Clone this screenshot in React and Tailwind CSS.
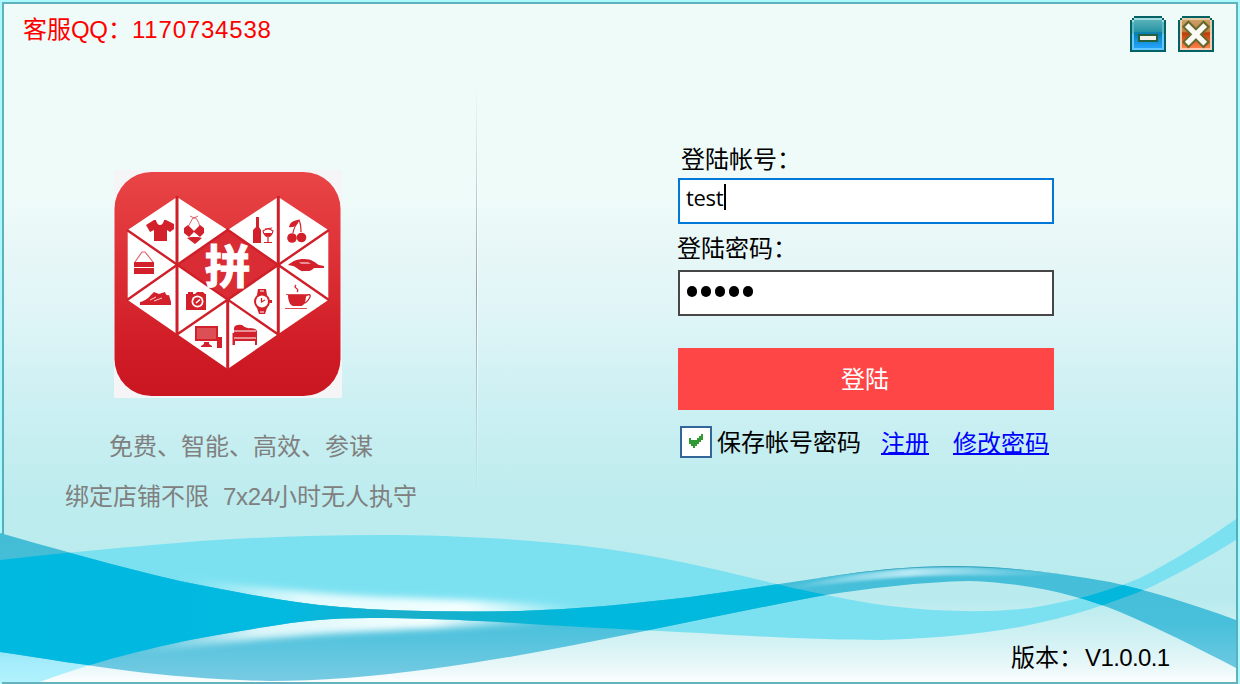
const BAND_LIGHT =
  "M0 560 C60 553 140 546 200 541 C260 537 320 535 380 535 C450 535 530 539 600 548 C660 556 710 568 760 580 C800 590 850 601 890 606 C940 612 990 613 1030 608 C1070 602 1110 591 1140 578 C1175 560 1205 541 1236 519 L1236 540 C1210 556 1180 573 1151 587 C1110 604 1070 617 1020 627 C970 636 920 639 880 640 C830 640 760 637 700 633 C640 630 580 627 530 624 C470 620 420 618 370 618 C330 618 300 621 265 627 C220 634 180 641 150 649 C120 656 80 667 40 682 L0 682 Z";

const BAND_BLUE =
  "M0 533 C50 547 110 565 180 581 C240 593 290 603 340 607 C400 612 460 612 520 611 C580 609 630 604 690 597 C740 590 790 582 840 575 C890 568 920 566 960 566 C1010 567 1060 573 1110 582 C1150 591 1190 603 1236 620 L1236 668 C1200 649 1160 629 1120 612 C1080 596 1030 583 970 581 C920 582 870 588 820 596 C760 607 700 620 640 632 C570 646 500 660 430 669 C370 677 320 681 270 681 C220 680 170 676 130 671 C90 666 40 658 0 652 Z";

function Waves() {
  return (
    <svg className="absolute inset-0" width="1240" height="684" viewBox="0 0 1240 684">
      <defs>
        <clipPath id="light"><path d={BAND_LIGHT} /></clipPath>
        <clipPath id="blue"><path d={BAND_BLUE} /></clipPath>
        <clipPath id="above">
          <path d="M0 500 H1240 V570 C1100 570 690 597 690 597 C630 604 580 609 520 611 C460 612 400 612 340 607 C290 603 240 593 180 581 C110 565 50 547 0 533 Z" />
        </clipPath>
        <clipPath id="below">
          <path d="M87 665 C110 658 130 654 150 649 C180 641 220 634 265 627 C300 621 330 618 370 618 C420 618 470 620 530 624 L640 631 C500 660 430 669 400 673 C300 682 200 680 87 665 Z" />
        </clipPath>
        <filter id="soft" x="-20%" y="-100%" width="140%" height="300%">
          <feGaussianBlur stdDeviation="6 3.5" />
        </filter>
        <filter id="fine" x="-10%" y="-100%" width="120%" height="300%">
          <feGaussianBlur stdDeviation="3 1.5" />
        </filter>
        <linearGradient id="blueFill" x1="0" x2="0" y1="533" y2="682" gradientUnits="userSpaceOnUse">
          <stop offset="0" stopColor="#43bcd6" />
          <stop offset="0.6" stopColor="#48c0db" />
          <stop offset="1" stopColor="#78cbe3" />
        </linearGradient>
        <linearGradient id="lightFill" x1="0" x2="0" y1="640" y2="682" gradientUnits="userSpaceOnUse">
          <stop offset="0" stopColor="#7be1f1" />
          <stop offset="0.5" stopColor="#a4ecfb" />
          <stop offset="1" stopColor="#b0f2fd" />
        </linearGradient>
        <linearGradient id="mixFill" x1="0" x2="1" y1="0" y2="0">
          <stop offset="0" stopColor="#00b9e0" />
          <stop offset="0.23" stopColor="#02b9e0" />
          <stop offset="0.33" stopColor="#1aafcb" />
          <stop offset="0.4" stopColor="#10b3d0" />
          <stop offset="0.47" stopColor="#00b8dd" />
          <stop offset="1" stopColor="#04b7dc" />
        </linearGradient>
        <linearGradient id="glow" x1="0" x2="1" y1="0" y2="0">
          <stop offset="0" stopColor="#f4ffff" stopOpacity="0" />
          <stop offset="0.3" stopColor="#f4ffff" stopOpacity="0.85" />
          <stop offset="0.7" stopColor="#f4ffff" />
          <stop offset="1" stopColor="#f4ffff" stopOpacity="0" />
        </linearGradient>
        <linearGradient id="streak" x1="0" x2="1" y1="0" y2="0">
          <stop offset="0" stopColor="#c4effa" stopOpacity="0" />
          <stop offset="0.45" stopColor="#b8e9f5" />
          <stop offset="1" stopColor="#9adcec" stopOpacity="0" />
        </linearGradient>
      </defs>
      <path d={BAND_LIGHT} fill="url(#lightFill)" />
      <g clipPath="url(#above)">
        <path
          d="M180 578 C250 587 320 594 380 597 C450 599 530 603 590 608 C500 624 400 622 340 616 C280 608 220 592 180 578 Z"
          fill="url(#glow)"
          filter="url(#soft)"
        />
      </g>
      <path d={BAND_BLUE} fill="url(#blueFill)" />
      <g clipPath="url(#below)">
        <path
          d="M130 654 C200 630 320 606 400 606 C460 610 520 618 560 623 C480 626 400 630 340 633 C260 638 190 646 130 654 Z"
          fill="url(#glow)"
          filter="url(#soft)"
        />
      </g>
      <g clipPath="url(#light)">
        <path d={BAND_BLUE} fill="url(#mixFill)" />
      </g>
      <g clipPath="url(#blue)">
        <path
          d="M780 590 C860 569 920 567 970 567 L1070 574 C1010 577 960 574 920 576 C880 578 830 584 780 590 Z"
          fill="url(#streak)"
          filter="url(#fine)"
        />
        <path
          d="M820 577 C890 567 920 566 960 566 C1000 567 1030 569 1060 573"
          fill="none"
          stroke="#3ca5bd"
          strokeWidth="2"
        />
      </g>
    </svg>
  );
}

function Logo() {
  return (
    <svg className="block" width="228" height="228" viewBox="0 0 228 228">
      <defs>
        <linearGradient id="red" x1="0" x2="0" y1="0" y2="1">
          <stop offset="0" stopColor="#e94546" />
          <stop offset="0.45" stopColor="#db2d34" />
          <stop offset="0.8" stopColor="#cf1b25" />
          <stop offset="1" stopColor="#ca1620" />
        </linearGradient>
      </defs>
      <rect width="228" height="228" fill="#f5f5f8" />
      <rect x="0.5" y="2" width="226" height="224" rx="37" fill="url(#red)" />
      <path
        d="M13.7 60 L63 27 L113.7 60 L164.3 27 L214.3 60 V130 L164.3 164 L113.7 199 L63 164 L13.7 130 Z"
        fill="#fff"
      />
      <path d="M63 95 L113.7 59 L164.3 95 L113.7 129.5 Z" fill="#da2c34" />
      <path
        d="M13 60 L164.3 164.5 M215 60 L63 164.5 M13 130 L63 95 L115 59 M112.5 59 L164.3 95 L215 130"
        fill="none"
        stroke="#cf1f29"
        strokeWidth="2.4"
      />
      <path
        d="M63 26 V164 M164.3 26 V164 M113.7 129 V200"
        fill="none"
        stroke="#cf1f29"
        strokeWidth="3"
      />
      <text
        x="113.7"
        y="113"
        textAnchor="middle"
        fontSize="46"
        fontWeight="700"
        fill="#fff"
        stroke="#fff"
        strokeWidth="1"
        fontFamily="'Noto Sans CJK SC', sans-serif"
      >
        拼
      </text>
      <g fill="#d3212b">
        {/* shirt */}
        <path d="M32 55 L40 50 H42 Q46 58 50 50 H52 L60 54 V59 L56 62 L53 60 V71 H40 V60 L36 62 Z" />
        <path d="M42 50 H50 Q49 55 46 55 Q43 55 42 50 Z" fill="#fff" />
        {/* bikini */}
        <path d="M70 58 L74 55 L80 61 L86 55 L90 58 V63 L86 67 L80 62 L75 67 L70 63 Z M73 68 L77 67 H84 L88 68 L81 74 Z" />
        <path d="M74 57 Q77 51 79 48 H82 Q85 52 86 57 M76 46 L80 48 L84 46" fill="none" stroke="#d3212b" strokeWidth="1" strokeOpacity="0.7" />
        {/* bottle and glass */}
        <path d="M142 47 H145 V57 L147 60 V73 H139 V60 L142 57 Z" />
        <path d="M149 61 Q154 57 159 61 Q158 66 154 67 Q150 66 149 61 Z M154 67 V72 M150 72.500 H158 M151 59 L158 58" fill="none" stroke="#d3212b" strokeWidth="1.200" />
        <path d="M149.500 63 H158.500 L156 66 H152 Z" />
        {/* cherries */}
        <circle cx="178" cy="68" r="4.800" />
        <circle cx="187.500" cy="67.500" r="4.800" />
        <path d="M175 57 C176 52 180 50 185 50 C184 55 180 58 175 57 Z" />
        <path d="M179 63 C180 57 182 54 185 50 Q187 54 187 62" fill="none" stroke="#d3212b" strokeWidth="1.200" />
        {/* handbag */}
        <path d="M20 92 H40 V97 H20 Z M20 98 H40 V104 H20 Z" />
        <path d="M21 92 L28 82 H31 L39 92" fill="none" stroke="#d3212b" strokeWidth="1.200" strokeOpacity="0.7" />
        {/* car */}
        <path d="M174 95 C179 91 183 89 190 89 C198 89 200 92 205 95 L210 96 V98 L200 98 C197 102 193 101 190 101 C186 102 183 97 179 96 Z" />
        <path d="M185 92 H194 L197 94 H187 Z" fill="#fff" fillOpacity="0.5" />
        {/* sneaker */}
        <path d="M26 132 C32 131 36 126 40 122 L45 124 L51 122 Q52 126 55 125 L57 132 V135 H26 Z" />
        <path d="M36 130 L42 127 M40 131 L48 128" stroke="#fff" strokeWidth="0.800" />
        {/* camera */}
        <path d="M72 124 H74 V122 H79 V124 H81 L83 122 H89 L91 124 H92 V140 H72 Z" />
        <circle cx="83.500" cy="131.500" r="6" fill="#fff" />
        <circle cx="83.500" cy="131.500" r="4.300" />
        <path d="M82 133 L86 129.500" stroke="#fff" strokeWidth="1.600" />
        {/* watch */}
        <path d="M144 119 H152 L153 125 H143 Z M143 138 H153 L151 144 H145 Z" />
        <path d="M146 121 H150 M146 142 H150" stroke="#fff" strokeWidth="1.200" />
        <circle cx="148" cy="131.500" r="8" />
        <path d="M155 130 H158 V133 H155 Z" />
        <circle cx="148" cy="131.500" r="6" fill="#fff" />
        <path d="M147.500 128 V132 L151 130" fill="none" stroke="#d3212b" strokeWidth="1.300" />
        {/* cup */}
        <path d="M174 125 H192 C192 132 190 135.500 187 136 H179 C176 135 174 131 174 125 Z" />
        <path d="M172 124.500 H194 M171 138.500 H193" stroke="#d3212b" strokeWidth="1.200" strokeOpacity="0.8" />
        <path d="M192 126 Q197 123 196 127 Q193 133 190 133 M183 122 Q185 120 182 118 Q180 117 182 115" fill="none" stroke="#d3212b" strokeWidth="1.300" />
        {/* computer */}
        <path d="M81 156 H104 V171 H81 Z M90 172 H95 V174 L98 176 V177 H87 V176 L90 174 Z M103 167 H108 V178 H103 Z" />
        <path d="M83 158 H102 V169 H83 Z" fill="#dc4f55" />
        {/* bed */}
        <path d="M120 158 Q121 154 128 155 Q132 159 136 158 Q142 158 143 161 V175 H141 V171 H121 V175 H118.500 V163 H120 Z" />
        <path d="M120 161 H142 M120 168 H142" stroke="#fff" strokeWidth="1.200" />
      </g>
    </svg>
  );
}

function MinimizeIcon() {
  return (
    <svg width="36" height="36" viewBox="0 0 18 18" shapeRendering="crispEdges">
      <defs>
        <linearGradient id="min" x1="0" x2="0" y1="0" y2="1">
          <stop offset="0" stopColor="#59b1b8" />
          <stop offset="0.44" stopColor="#2493a4" />
          <stop offset="0.45" stopColor="#087bad" />
          <stop offset="1" stopColor="#24a3fc" />
        </linearGradient>
      </defs>
      <path d="M2 0 H16 V1 H17 V2 H18 V18 H0 V2 H1 V1 H2 Z" fill="#046264" />
      <path d="M2 1 H16 V2 H17 V17 H1 V2 H2 Z" fill="#a3dfe2" />
      <path d="M1 3 H17 V9 H1 Z" fill="#5fb9cb" />
      <path d="M1 9 H17 V17 H1 Z" fill="#62c8ff" />
      <path d="M2 2 H16 V16 H2 Z" fill="url(#min)" />
      <path d="M4 9 H14 V13 H4 Z" fill="#24613c" />
      <path d="M5 10 H13 V12 H5 Z" fill="#f3f3ea" />
    </svg>
  );
}

function CloseIcon() {
  return (
    <svg width="36" height="36" viewBox="0 0 18 18">
      <defs>
        <linearGradient id="close" x1="0" x2="0" y1="0" y2="1">
          <stop offset="0" stopColor="#cba169" />
          <stop offset="0.44" stopColor="#c27a3e" />
          <stop offset="0.45" stopColor="#b93c05" />
          <stop offset="1" stopColor="#ff7e49" />
        </linearGradient>
      </defs>
      <g shapeRendering="crispEdges">
        <path d="M2 0 H16 V1 H17 V2 H18 V18 H0 V2 H1 V1 H2 Z" fill="#046264" />
        <path d="M2 1 H16 V2 H17 V17 H1 V2 H2 Z" fill="#e6cda5" />
        <path d="M1 9 H17 V17 H1 Z" fill="#ffc9ad" />
        <path d="M2 2 H16 V16 H2 Z" fill="url(#close)" />
      </g>
      <path d="M5.200 5.400 L12.800 13 M12.800 5.400 L5.200 13" stroke="#656a2c" strokeWidth="4.600" strokeLinecap="square" />
      <path d="M5.300 5.500 L12.700 12.900 M12.700 5.500 L5.300 12.900" stroke="#fbfaf5" strokeWidth="2.600" strokeLinecap="square" />
    </svg>
  );
}

function CheckBox() {
  return (
    <span className="flex h-8 w-8 items-center justify-center border-2 border-[#336699] bg-white">
      <svg className="-mt-0.5" width="14" height="14" viewBox="0 0 7 7" shapeRendering="crispEdges">
        <path d="M6 0 H7 V3 H6 V4 H5 V5 H4 V6 H3 V7 H2 V6 H1 V5 H0 V2 H1 V3 H3 V3 H4 V2 H5 V1 H6 Z" fill="#339933" />
      </svg>
    </span>
  );
}

export default function App() {
  return (
    <div className="relative h-[684px] w-[1240px] overflow-hidden bg-[linear-gradient(180deg,#eefbf8_0px,#eefbf9_200px,#e8f7f7_245px,#e0f5f7_310px,#cdf0f3_400px,#bdecee_500px,#b9ebee_600px,#d5f2f4_644px,#eef9fa_672px,#fdffff_682px)] font-['Liberation_Sans','Noto_Sans_CJK_SC',sans-serif] text-2xl text-black">
      <div className="absolute inset-0 border-t-2 border-r-2 border-l-2 border-[#aaf9fc]">
        <div className="h-full border-2 border-[#3c9fae]/80" />
      </div>
      <Waves />
      <div className="relative flex h-full flex-col p-1">
        <header className="flex h-[52px] items-start justify-between pt-3 pr-[22px] pl-[19px]">
          <p className="flex leading-7 text-[#ff0000]">
            <span>客服</span>
            <span className="w-[37px] tracking-[-0.3px]">QQ</span>
            <span className="w-6">：</span>
            <span className="tracking-[0.8px]">1170734538</span>
          </p>
          <div className="flex gap-3">
            <button aria-label="最小化"><MinimizeIcon /></button>
            <button aria-label="关闭"><CloseIcon /></button>
          </div>
        </header>

        <main className="flex h-[560px]">
          <section className="w-[472px] pt-[114px] text-[#808080]">
            <div className="ml-[110px]"><Logo /></div>
            <p className="mt-[34px] ml-[105px] leading-[30px] whitespace-nowrap">免费、智能、高效、参谋</p>
            <p className="mt-5 ml-[61px] flex leading-[30px] whitespace-nowrap">
              <span>绑定店铺不限</span>
              <span className="ml-[14px] w-[50px] tracking-[-0.3px]">7x24</span>
              <span>小时无人执守</span>
            </p>
          </section>

          <div className="mt-8 flex h-[406px] w-0.5">
            <div className="w-px bg-linear-to-b from-transparent via-[#93a4a9] to-transparent" />
            <div className="w-px bg-linear-to-b from-transparent via-[#c3d0d4] to-transparent" />
            <div className="w-px shrink-0 bg-linear-to-b from-transparent via-white to-transparent" />
          </div>

          <form className="ml-[200px] w-[376px] pt-[90px]">
            <label className="ml-[3px] flex h-8 leading-7">
              登陆帐号<span className="w-6">：</span>
            </label>
            <div className="flex h-[46px] border-2 border-[#0078d7] bg-white pt-1 pl-1.5">
              <span className="w-[38px] font-['Open_Sans',sans-serif] text-[22px] leading-[27px] tracking-[-0.3px]">test</span>
              <span className="h-[26px] w-0.5 bg-black" />
            </div>
            <label className="mt-[11px] -ml-px flex h-[35px] leading-7">登陆密码<span>：</span></label>
            <div className="flex h-[46px] items-center gap-1 border-2 border-[#464646] bg-white pb-1 pl-[7px]">
              <i className="h-[11px] w-2.5 rounded-full bg-black" />
              <i className="h-[11px] w-2.5 rounded-full bg-black" />
              <i className="h-[11px] w-2.5 rounded-full bg-black" />
              <i className="h-[11px] w-2.5 rounded-full bg-black" />
              <i className="h-[11px] w-2.5 rounded-full bg-black" />
            </div>
            <button type="button" className="mt-8 block h-[62px] w-full bg-[#ff4646] pt-0.5 pr-0.5 text-white">
              登陆
            </button>
            <div className="mt-4 flex h-8 items-center whitespace-nowrap">
              <span className="ml-0.5"><CheckBox /></span>
              <span className="ml-[5px] pt-0.5 leading-8">保存帐号密码</span>
              <a href="#" className="ml-5 pt-1 leading-8 text-[#0000ff] underline decoration-2 underline-offset-1">注册</a>
              <a href="#" className="ml-6 pt-1 leading-8 text-[#0000ff] underline decoration-2 underline-offset-1">修改密码</a>
            </div>
          </form>
        </main>

        <footer className="flex pt-7 pl-[1007px] leading-7">
          版本：<span className="ml-0.5 tracking-[-0.6px]">V1.0.0.1</span>
        </footer>
      </div>
    </div>
  );
}
